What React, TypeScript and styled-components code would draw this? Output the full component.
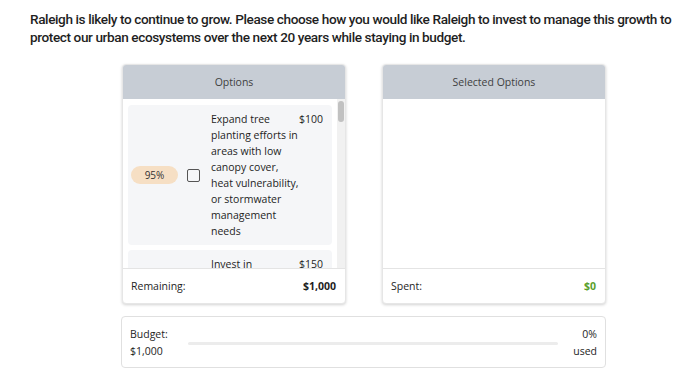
import React from 'react';
import styled, { createGlobalStyle } from 'styled-components';

const GlobalStyle = createGlobalStyle`
  html, body {
    margin: 0;
    padding: 0;
    background: #ffffff;
  }
  body {
    font-family: "Open Sans", "Noto Sans", sans-serif;
    color: #222;
  }
`;

const Page = styled.div`
  width: 690px;
  padding: 10px 0 0 30px;
  box-sizing: border-box;
`;

const Prompt = styled.p`
  margin: 0;
  width: 650px;
  font-family: Roboto, "Liberation Sans", sans-serif;
  font-size: 13.6px;
  line-height: 18px;
  font-weight: 500;
  letter-spacing: -0.4px;
  color: #1f1f1f;
`;

const Board = styled.div`
  margin: 18px 0 0 92px;
  width: 484px;
`;

const Columns = styled.div`
  display: flex;
  gap: 36px;
`;

const Panel = styled.div`
  width: 224px;
  height: 240px;
  display: flex;
  flex-direction: column;
  border: 1px solid #e6e6e6;
  border-radius: 4px;
  box-shadow: 0 1px 3px rgba(0, 0, 0, 0.18);
  overflow: hidden;
  box-sizing: border-box;
  background: #fff;
`;

const PanelHeader = styled.div`
  height: 34px;
  flex: none;
  display: flex;
  align-items: center;
  justify-content: center;
  background: #c7cdd5;
  color: #3f3f3f;
  font-size: 10.5px;
`;

const ListArea = styled.div`
  flex: 1;
  min-height: 0;
  display: flex;
`;

const OptionList = styled.div`
  flex: 1;
  overflow: hidden;
  padding: 6px 5px 0 5px;
  display: flex;
  flex-direction: column;
  gap: 5px;
`;

const ScrollTrack = styled.div`
  width: 8px;
  flex: none;
  background: #f1f1f1;
  padding: 2px 1px;
  box-sizing: border-box;
`;

const ScrollThumb = styled.div`
  height: 21px;
  background: #c1c1c1;
  border-radius: 3px;
`;

const EmptyList = styled.div`
  flex: 1;
`;

const OptionCard = styled.div`
  flex: none;
  display: grid;
  grid-template-columns: 47px 33px 1fr auto;
  align-items: center;
  padding: 6px 9px 6px 3px;
  background: #f5f6f8;
  border-radius: 4px;
  font-size: 10.5px;
  line-height: 16px;
  color: #1e1e1e;
`;

const Pill = styled.span<{ tone: string }>`
  height: 18px;
  border-radius: 9px;
  background: ${(p) => p.tone};
  display: flex;
  align-items: center;
  justify-content: center;
  font-size: 10px;
  color: #333;
`;

const Box = styled.span`
  width: 13px;
  height: 13px;
  margin-left: 9px;
  border: 1.5px solid #555;
  border-radius: 2px;
  box-sizing: border-box;
`;

const Description = styled.span`
  align-self: start;
`;

const Price = styled.span`
  align-self: start;
  text-align: right;
`;

const PanelFooter = styled.div`
  height: 34px;
  flex: none;
  display: flex;
  align-items: center;
  justify-content: space-between;
  padding: 0 9px 0 8px;
  border-top: 1px solid #e4e4e4;
  font-size: 10.5px;
  color: #1e1e1e;
`;

const Amount = styled.span<{ color?: string }>`
  font-weight: 700;
  color: ${(p) => p.color || '#1e1e1e'};
`;

const BudgetBox = styled.div`
  margin-top: 12px;
  width: 485px;
  margin-left: -1px;
  box-sizing: border-box;
  border: 1px solid #e0e0e0;
  border-radius: 4px;
  padding: 9px 8px 7px 8px;
  display: grid;
  grid-template-columns: 58px 1fr 39px;
  align-items: center;
  font-size: 10.5px;
  line-height: 17px;
  color: #1e1e1e;
`;

const BarTrack = styled.div`
  height: 3px;
  background: #ececec;
  border-radius: 2px;
`;

const BarFill = styled.div`
  height: 100%;
  background: #5aa02c;
  border-radius: 2px;
`;

const RightText = styled.div`
  text-align: right;
`;

const options = [
  {
    pct: '95%',
    tone: '#f6dfc4',
    text: 'Expand tree planting efforts in areas with low canopy cover, heat vulnerability, or stormwater management needs',
    price: '$100',
  },
  {
    pct: '90%',
    tone: '#f6dfc4',
    text: 'Invest in stormwater infrastructure that protects streams',
    price: '$150',
  },
];

const App: React.FC = () => {
  const used = 0;
  return (
    <>
      <GlobalStyle />
      <Page>
        <Prompt>
          Raleigh is likely to continue to grow. Please choose how you would like Raleigh to invest to manage this growth to
          protect our urban ecosystems over the next 20 years while staying in budget.
        </Prompt>
        <Board>
          <Columns>
            <Panel>
              <PanelHeader>Options</PanelHeader>
              <ListArea>
                <OptionList>
                  {options.map((o) => (
                    <OptionCard key={o.price}>
                      <Pill tone={o.tone}>{o.pct}</Pill>
                      <Box />
                      <Description>{o.text}</Description>
                      <Price>{o.price}</Price>
                    </OptionCard>
                  ))}
                </OptionList>
                <ScrollTrack>
                  <ScrollThumb />
                </ScrollTrack>
              </ListArea>
              <PanelFooter>
                <span>Remaining:</span>
                <Amount>$1,000</Amount>
              </PanelFooter>
            </Panel>
            <Panel>
              <PanelHeader>Selected Options</PanelHeader>
              <EmptyList />
              <PanelFooter>
                <span>Spent:</span>
                <Amount color="#5aa02c">$0</Amount>
              </PanelFooter>
            </Panel>
          </Columns>
          <BudgetBox>
            <div>
              Budget:
              <br />
              $1,000
            </div>
            <BarTrack>
              <BarFill style={{ width: `${used}%` }} />
            </BarTrack>
            <RightText>
              {used}%
              <br />
              used
            </RightText>
          </BudgetBox>
        </Board>
      </Page>
    </>
  );
};

export default App;
